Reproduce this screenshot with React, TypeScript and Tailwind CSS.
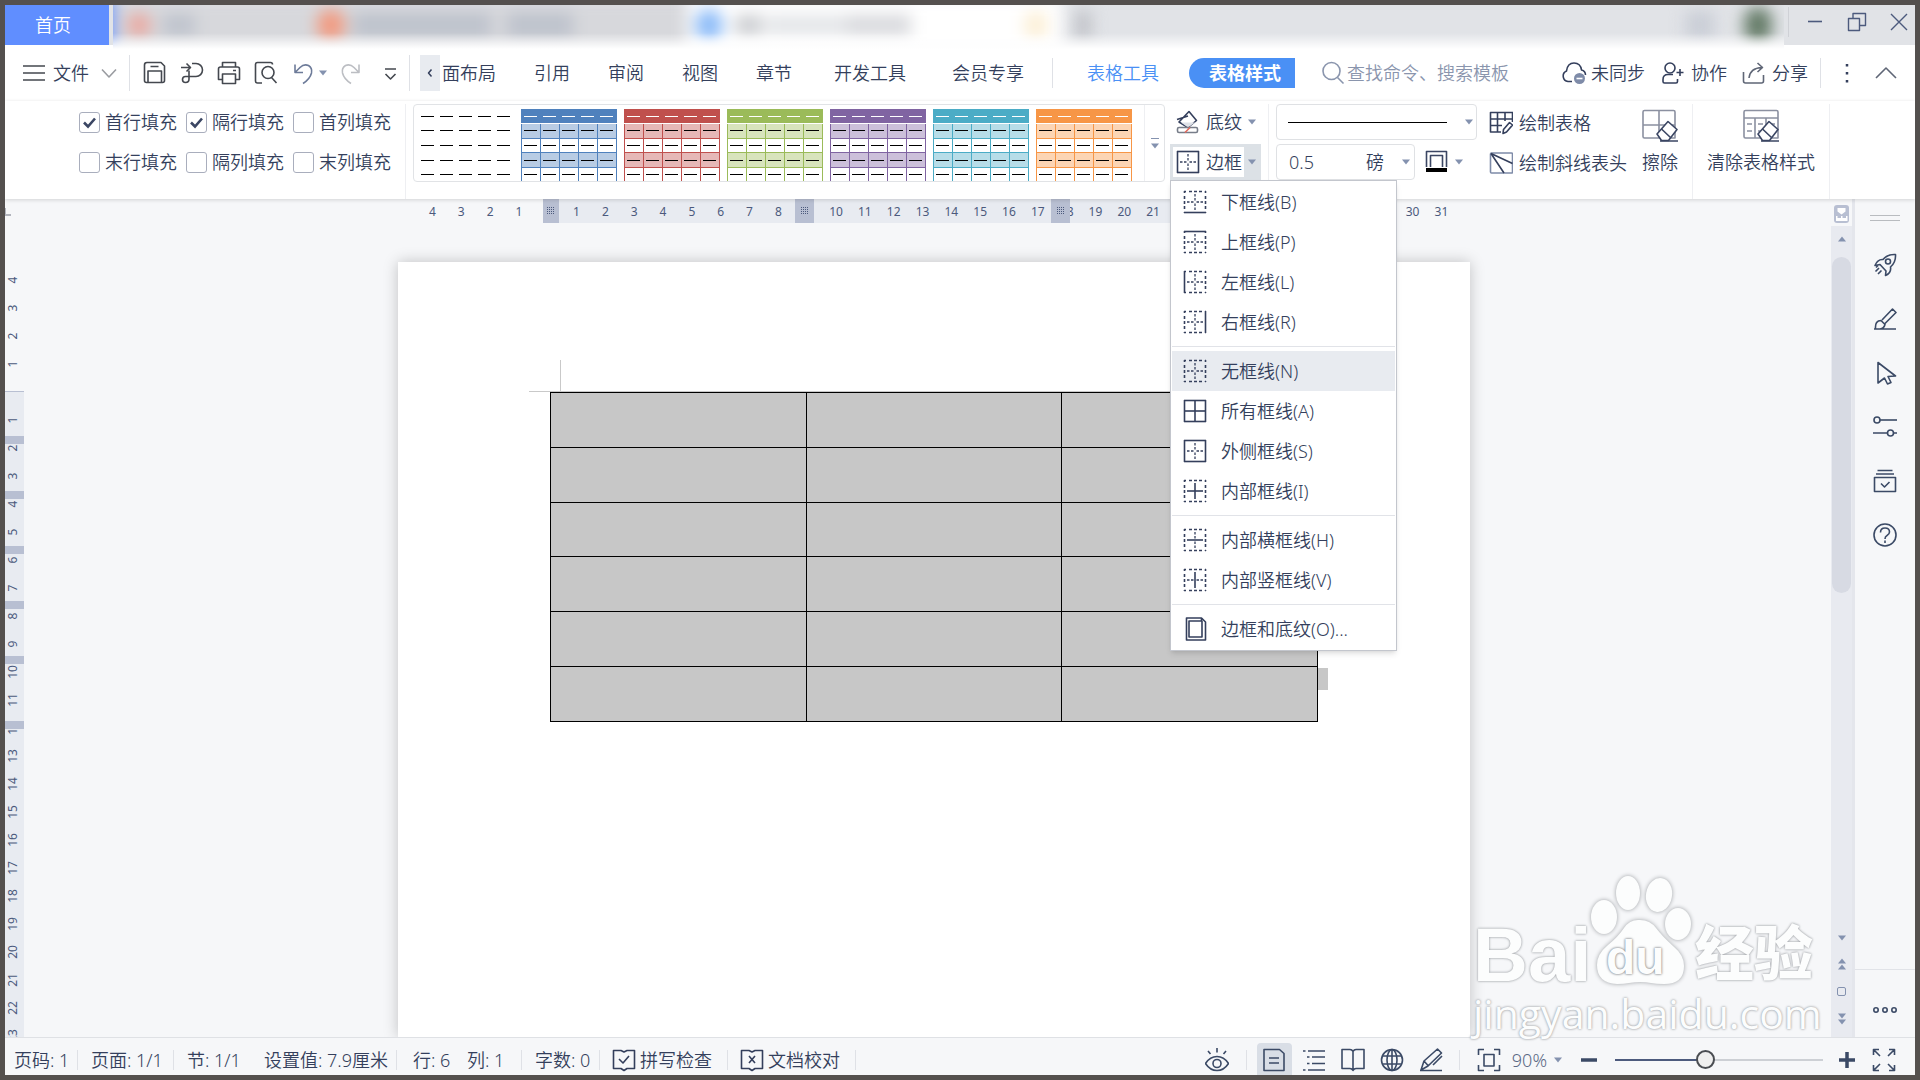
import type { ReactNode } from 'react';

interface IconProps {
  children: ReactNode;
  className?: string;
  box?: number;
}

interface BorderSides {
  top?: boolean;
  bottom?: boolean;
  left?: boolean;
  right?: boolean;
  h?: boolean;
  v?: boolean;
}

const Icon = ({ children, className = 'h-6 w-6', box = 24 }: IconProps) => (
  <svg
    viewBox={`0 0 ${box} ${box}`}
    className={`shrink-0 ${className}`}
    fill="none"
    stroke="currentColor"
    strokeWidth="1.6"
    strokeLinejoin="round"
    aria-hidden="true"
  >
    {children}
  </svg>
);

const Caret = ({ className = '' }: { className?: string }) => (
  <svg viewBox="0 0 8 6" className={`h-[6px] w-2 shrink-0 fill-[#8492af] ${className}`} aria-hidden="true">
    <path d="M0 0.5h8L4 5.5z" />
  </svg>
);

const Divider = ({ className = '' }: { className?: string }) => (
  <div className={`w-px shrink-0 bg-[#dfe1e6] ${className}`} />
);

const BorderIcon = ({ top, bottom, left, right, h, v }: BorderSides) => {
  const dash = (solid?: boolean) => (solid ? undefined : '2 3 3 2 3 2 3 3 2');
  const full = top && bottom;
  return (
    <Icon>
      <path d="M1 1.500h22" strokeDasharray={dash(top)} />
      <path d="M1 22.500h22" strokeDasharray={dash(bottom)} />
      <path d="M1.500 1v22" strokeDasharray={dash(left)} />
      <path d="M22.500 1v22" strokeDasharray={dash(right)} />
      {h ? <path d={full ? 'M1.500 12h21' : 'M4 12h16'} /> : <path d="M4 12h2.500M8 12h2.500M13.500 12h2.500M17.500 12h2.500" strokeWidth="1.300" />}
      {v ? <path d={full ? 'M12 1.500v21' : 'M12 4v16'} /> : <path d="M12 4v2.500M12 8v2.500M12 13.500v2.500M12 17.500v2.500" strokeWidth="1.300" />}
    </Icon>
  );
};

const menuGroups: { label: string; sides?: BorderSides; active?: boolean }[][] = [
  [
    { label: '下框线(B)', sides: { bottom: true } },
    { label: '上框线(P)', sides: { top: true } },
    { label: '左框线(L)', sides: { left: true } },
    { label: '右框线(R)', sides: { right: true } },
  ],
  [
    { label: '无框线(N)', sides: {}, active: true },
    { label: '所有框线(A)', sides: { top: true, bottom: true, left: true, right: true, h: true, v: true } },
    { label: '外侧框线(S)', sides: { top: true, bottom: true, left: true, right: true } },
    { label: '内部框线(I)', sides: { h: true, v: true } },
  ],
  [
    { label: '内部横框线(H)', sides: { h: true } },
    { label: '内部竖框线(V)', sides: { v: true } },
  ],
  [{ label: '边框和底纹(O)...' }],
];

const tableStyles = [
  { name: '无样式', main: '', light: '' },
  { name: '蓝色', main: '#4f81bd', light: '#b8cce4' },
  { name: '红色', main: '#c0504d', light: '#e6b8b7' },
  { name: '绿色', main: '#9bbb59', light: '#d8e4bc' },
  { name: '紫色', main: '#8064a2', light: '#ccc0da' },
  { name: '青色', main: '#4bacc6', light: '#b7dde8' },
  { name: '橙色', main: '#f79646', light: '#fcd5b4' },
];

const tabs = [
  { label: '引用', wide: false },
  { label: '审阅', wide: false },
  { label: '视图', wide: false },
  { label: '章节', wide: false },
  { label: '开发工具', wide: true },
  { label: '会员专享', wide: true },
];

const fills = [
  { label: '首行填充', on: true },
  { label: '隔行填充', on: true },
  { label: '首列填充', on: false },
  { label: '末行填充', on: false },
  { label: '隔列填充', on: false },
  { label: '末列填充', on: false },
];

const horizontalMarks = Array.from({ length: 36 }, (_, i) => i - 4);
const verticalMarks = Array.from({ length: 28 }, (_, i) => i - 4);

function StyleThumb({ main, light }: { main: string; light: string }) {
  const cols = [0, 1, 2, 3, 4];
  return (
    <svg viewBox="0 0 96 72" className="h-[72px] w-24" shapeRendering="crispEdges" aria-hidden="true">
      {main && (
        <>
          <rect width="96" height="14" fill={main} />
          <rect y="15" width="96" height="14" fill={light} />
          <rect y="44" width="96" height="14" fill={light} />
          <path d="M0 29.500h96M0 43.500h96M0 58.500h96M.5 15v57M19.500 15v57M38.500 15v57M57.500 15v57M76.500 15v57M95.500 15v57" stroke={main} />
        </>
      )}
      {[7, 21, 36, 51, 65].map((y) =>
        cols.map((c) => (
          <rect key={`${y}-${c}`} x={3 + c * 19} y={y} width="13" height="1" fill={main && y === 7 ? '#fff' : '#000'} />
        ))
      )}
    </svg>
  );
}

function TitleBar() {
  return (
    <div className="flex h-10 items-start bg-[#e1e3e7]">
      <button className="h-10 w-[104px] shrink-0 bg-[#608eff] pr-2 pb-px text-white">首页</button>
      <div className="relative z-10 ml-1 flex h-11 flex-1 overflow-hidden bg-[#e1e3e7]">
        <div className="flex flex-1 items-center pb-1 blur-[8px]">
          <div className="-ml-4 h-14 w-4 bg-[#608eff]" />
          <div className="flex h-14 w-[574px] items-center bg-[#d7d8dc]">
            <div className="ml-[14px] h-6 w-6 rounded-full bg-[#eba79f]" />
            <div className="ml-3 h-5 w-8 bg-[#bdc2cc]" />
            <div className="ml-[122px] h-8 w-7 rounded-full bg-[#f29a80]" />
            <div className="ml-2 h-6 w-[138px] bg-[#bdc2cc]" />
            <div className="ml-4 h-6 w-[66px] bg-[#bdc2cc]" />
          </div>
          <div className="flex h-14 w-[376px] items-center bg-white">
            <div className="ml-2 h-8 w-7 rounded-full bg-[#8dbcf8]" />
            <div className="ml-3 h-5 w-7 bg-[#cbcdd1]" />
            <div className="ml-1 h-5 w-20 bg-[#e3e5e8]" />
            <div className="h-5 w-16 bg-[#d7d8dc]" />
            <div className="ml-[113px] h-7 w-6 rounded-full bg-[#fcefd6]" />
          </div>
          <div className="ml-3 h-7 w-4 bg-[#bfc1c7]" />
          <div className="ml-auto h-7 w-7 bg-[#c9cdd6]" />
          <div className="mr-[12px] ml-[30px] h-9 w-7 rounded-full bg-[#637a66]" />
        </div>
        <div className="absolute inset-x-0 bottom-0 h-4 bg-linear-to-b from-white/0 to-white" />
      </div>
      <Divider className="mt-[2px] ml-[4px] h-[30px] !bg-[#cfd1d6]" />
      <div className="flex h-[34px] items-center gap-[22px] pr-[6px] pl-[16px] text-[#4c5a7d]">
        <button aria-label="最小化">
          <Icon className="h-5 w-5" box={20}><path d="M3 9.500h14" /></Icon>
        </button>
        <button aria-label="还原">
          <Icon className="h-5 w-5" box={20}>
            <path d="M1.500 6.500h11v12h-11zM6 6V1.500h12.500v12H13" strokeWidth="1.400" />
          </Icon>
        </button>
        <button aria-label="关闭">
          <Icon className="h-5 w-5" box={20}><path d="M2 2l16 16M18 2L2 18" strokeWidth="1.400" /></Icon>
        </button>
      </div>
    </div>
  );
}

function MenuRow() {
  return (
    <div className="flex h-14 items-center whitespace-nowrap bg-white">
      <button className="flex items-center pl-[17px]">
        <Icon className="h-6 w-6 text-[#44484f]"><path d="M1 5h22M1 12h22M1 19h22" /></Icon>
        <span className="ml-[7px]">文件</span>
        <Icon className="ml-3 h-4 w-4 text-[#9a9ca1]" box={16}><path d="M1 4.500l7 7.500 7-7.500" /></Icon>
      </button>
      <Divider className="ml-3 h-9" />
      <div className="ml-[13px] flex items-center gap-[13px] text-[#44484f]">
        <button aria-label="保存">
          <Icon>
            <path d="M1.500 4q0-2.500 2.500-2.500h14l3.500 3.500v14.500q0 2-2 2h-16q-2 0-2-2z" />
            <path d="M5 21V10h13.500v11M7.500 5.500h8" />
          </Icon>
        </button>
        <button aria-label="输出为PDF">
          <Icon>
            <path d="M1 6.500h9M6.500 2.500l4 4-4 4" />
            <path d="M12 2.500h4a6 6 0 010 13H5.500a3 3 0 000 6q3.500 0 3.500-3.500V9.500" />
          </Icon>
        </button>
        <button aria-label="打印">
          <Icon>
            <path d="M5.500 6V1.500h13V6M5 18.500H1.500V8q0-2 2-2h17q2 0 2 2v10.500H19M16 9.500h3" />
            <path d="M5.500 13h13v9.500h-13z" />
          </Icon>
        </button>
        <button aria-label="打印预览">
          <Icon>
            <path d="M8 22H3.500q-2 0-2-2V3.500q0-2 2-2h13q2 0 2 2" />
            <circle cx="14" cy="11.500" r="6" />
            <path d="M17.500 16.500l5 5.500" />
          </Icon>
        </button>
        <button aria-label="撤销" className="text-[#6d7b99]">
          <Icon><path d="M4 3.500v8h8M4.500 11L9 6.500q4-4 8.500-2 4 2.500 3 7.500-1.500 6-8.500 10.500" /></Icon>
        </button>
      </div>
      <Caret className="ml-1" />
      <button aria-label="恢复" className="ml-3 text-[#bcbec3]">
        <Icon><path d="M20 3.500v8h-8M19.500 11L15 6.500q-4-4-8.500-2-4 2.500-3 7.500 1.500 6 8.500 10.500" /></Icon>
      </button>
      <button aria-label="更多" className="ml-[15px] text-[#44484f]">
        <Icon><path d="M7 8h11M7.500 13l5 5 5-5" /></Icon>
      </button>
      <Divider className="ml-[7px] h-9" />
      <button aria-label="向左滚动" className="ml-[10px] flex h-9 w-5 items-center justify-center bg-[#e8ebf0]">
        <Icon className="h-3 w-3" box={12}><path d="M7.500 2.500L4.500 6l3 3.500" strokeWidth="1.500" /></Icon>
      </button>
      <nav className="flex items-center">
        <a href="#layout" className="pr-[19px] pl-0.5">面布局</a>
        {tabs.map((tab) => (
          <a key={tab.label} href="#tab" className={tab.wide ? 'px-[23px]' : 'px-[19px]'}>{tab.label}</a>
        ))}
        <Divider className="ml-[5px] h-[30px]" />
        <a href="#tools" className="ml-[34px] text-[#4a90f5]">表格工具</a>
        <a href="#style" className="ml-[30px] flex h-[30px] items-center rounded-l-full rounded-r-sm bg-[#4a90f5] pr-[14px] pl-5 font-bold text-white">
          表格样式
        </a>
      </nav>
      <label className="ml-[26px] flex items-center gap-[2px] text-[#8a95ad]">
        <Icon><circle cx="10.500" cy="10" r="8.500" /><path d="M16.500 16.500l6 6" /></Icon>
        <input type="text" aria-label="搜索" placeholder="查找命令、搜索模板" className="w-[180px] bg-transparent outline-none placeholder:text-[#8a95ad]" />
      </label>
      <div className="ml-auto flex items-center">
        <button className="flex items-center gap-1">
          <Icon className="h-[26px] w-[26px]" box={26}>
            <path d="M11 21.500H7a5.500 5.500 0 01-1.500-10.500q1-8 7.500-8t7.500 7q4 1 4 5" />
            <circle cx="18.500" cy="18.500" r="5.500" fill="#7e8ba8" stroke="none" />
            <path d="M15.500 18.500h6" stroke="#fff" />
          </Icon>
          未同步
        </button>
        <button className="ml-4 flex items-center gap-[6px]">
          <Icon>
            <circle cx="9" cy="7" r="5" />
            <path d="M12 13.500H7q-5 0-5 5v2q0 1.500 1.500 1.500H15q1.500 0 1.500-1.500V18M15.500 11.500h7M19 8v7" />
          </Icon>
          协作
        </button>
        <button className="ml-[15px] flex items-center gap-[6px]">
          <Icon className="h-6 w-6 text-[#5f6676]">
            <path d="M1.500 11v9q0 2 2 2h16q2 0 2-2v-6" />
            <path d="M7 17q1-10 13-10.500M15.500 2l5 4.500-5 4.500" />
          </Icon>
          分享
        </button>
        <Divider className="ml-3 h-[30px]" />
        <button aria-label="更多选项" className="ml-[14px]">
          <Icon><path d="M12 3v2.500M12 11v2.500M12 19v2.500" strokeWidth="2.500" /></Icon>
        </button>
        <button aria-label="折叠功能区" className="mr-[17px] ml-[15px]">
          <Icon className="h-6 w-6 text-[#5f6676]"><path d="M2 17l10-10 10 10" /></Icon>
        </button>
      </div>
    </div>
  );
}

function BorderMenu() {
  return (
    <div role="menu" className="absolute top-[76px] left-0 z-30 w-[227px] border border-[#c3c6cd] bg-white px-px py-px shadow-md">
      {menuGroups.map((group, i) => (
        <div key={group[0].label}>
          {i > 0 && <div className="my-1 h-px bg-[#e1e3e8]" />}
          {group.map((item) => (
            <button
              key={item.label}
              role="menuitem"
              className={`flex h-10 w-full items-center gap-[14px] pl-[11px] ${item.active ? 'bg-[#e8ebf0]' : ''}`}
            >
              {item.sides ? (
                <BorderIcon {...item.sides} />
              ) : (
                <Icon>
                  <path d="M3.500 1h15l4 4v18h-19z" />
                  <path d="M6 4h13v16H6zM18.500 1v3" />
                </Icon>
              )}
              {item.label}
            </button>
          ))}
        </div>
      ))}
    </div>
  );
}

const Eraser = () => (
  <>
    <path d="M15 26l11-12.500 9 8-8.500 11h-7z" fill="#fff" stroke="#3b4663" />
    <path d="M18 33h18M19.500 21l9 8.500" stroke="#3b4663" />
  </>
);

function Ribbon() {
  return (
    <div className="relative z-20 flex h-[98px] items-start whitespace-nowrap bg-white pt-[3px] shadow-[0_1px_4px_rgba(0,0,0,0.15)]">
      <div className="ml-[74px] grid grid-cols-3 gap-x-[9px] gap-y-1">
        {fills.map((fill) => (
          <label key={fill.label} className="relative flex h-9 items-center">
            <input
              type="checkbox"
              defaultChecked={fill.on}
              className="peer mr-[5px] h-[21px] w-[21px] appearance-none rounded-[3px] border border-[#a9aebd] bg-white"
            />
            <svg viewBox="0 0 21 21" className="pointer-events-none absolute left-0 hidden h-[21px] w-[21px] peer-checked:block" aria-hidden="true">
              <path d="M5 10.500l4 4 7-8" fill="none" stroke="#3b4663" strokeWidth="2.600" />
            </svg>
            {fill.label}
          </label>
        ))}
      </div>
      <Divider className="ml-[14px] h-[95px] !bg-[#eeeff2]" />

      <div className="ml-[7px] flex h-[78px] w-[752px] shrink-0 rounded-sm border border-[#e1e3e6] pt-1 pl-1">
        <div className="flex flex-1 gap-[7px]">
          {tableStyles.map((s) => (
            <button key={s.name} aria-label={s.name}>
              <StyleThumb main={s.main} light={s.light} />
            </button>
          ))}
        </div>
        <button aria-label="更多样式" className="-mt-1 flex w-5 flex-col items-center justify-center gap-1 border-l border-[#eeeff2]">
          <span className="h-px w-2 bg-[#8492af]" />
          <Caret />
        </button>
      </div>

      <div className="relative ml-[5px] flex w-[91px] flex-col gap-1">
        <button className="flex h-9 items-center pl-[6px]">
          <Icon>
            <path d="M3 12L13 1.500l7.500 9L12 17.500zM1 9.500l11-3.500" />
            <path d="M5 12.500h14l-7 5z" fill="#dfe2e8" stroke="none" />
            <rect x="1.500" y="17.500" width="20" height="5" rx="1.500" stroke="#777d89" />
            <path d="M9 22.500l5-5" stroke="#e36a5c" />
          </Icon>
          <span className="ml-[6px]">底纹</span>
          <Caret className="ml-[6px]" />
        </button>
        <div className="flex h-9 items-center bg-[#dce1e6] p-[3px]">
          <button className="flex h-[30px] w-[71px] items-center gap-[6px] bg-white pl-[3px]">
            <BorderIcon top bottom left right />
            边框
          </button>
          <button aria-label="边框选项" className="flex h-full flex-1 items-center pl-1"><Caret /></button>
        </div>
        <BorderMenu />
      </div>
      <Divider className="ml-[7px] h-[95px] !bg-[#eeeff2]" />

      <div className="ml-[7px] flex w-[201px] flex-col gap-1">
        <div className="relative flex h-9 items-center">
          <select aria-label="线型" className="h-9 w-full appearance-none rounded-sm border border-[#dfe1e4] bg-white text-transparent">
            <option>实线</option>
          </select>
          <div className="pointer-events-none absolute inset-x-3 flex items-center justify-between">
            <span className="h-px w-[159px] bg-black" />
            <Caret className="-mr-2" />
          </div>
        </div>
        <div className="flex h-9 items-center">
          <label className="flex h-9 w-[139px] items-center rounded-sm border border-[#dfe1e4] pr-1 pl-3">
            <input type="text" aria-label="线宽" defaultValue="0.5" className="w-[77px] outline-none" />
            磅
            <Caret className="ml-auto" />
          </label>
          <button aria-label="边框颜色" className="ml-[10px] flex items-center gap-[6px]">
            <Icon>
              <path d="M1.500 17V1.500h20V17M5.500 17V5.500h12V17" stroke="#3b4663" />
              <path d="M1 20h21" stroke="#000" strokeWidth="4" />
            </Icon>
            <Caret />
          </button>
        </div>
      </div>

      <div className="ml-3 flex flex-col gap-1">
        <button className="flex h-9 items-center gap-[6px] pt-px">
          <Icon>
            <path d="M12 21H1.500V1.500h22V11M1.500 8h22M1.500 14.500H13M8.500 1.500V21M16 1.500V10" />
            <path d="M14 22.500l.5-4 6-7 3 2.500-6 7z" />
          </Icon>
          绘制表格
        </button>
        <button className="flex h-9 items-center gap-[6px] pt-px">
          <Icon>
            <rect x="1.500" y="2" width="22" height="20" rx="1" stroke="#7e8ba8" />
            <path d="M2 2.500l21.500 10M2 2.500L15 22" />
          </Icon>
          绘制斜线表头
        </button>
      </div>

      <button className="mt-1 ml-[15px] flex flex-col items-center">
        <Icon className="h-9 w-9 text-[#8b90a0]" box={36}>
          <path d="M1 4q0-1.500 1.500-1.500h29q1.500 0 1.500 1.500v26H2.500q-1.500 0-1.500-1.500zM1 17h32M17 2.500V30" />
          <Eraser />
        </Icon>
        <span className="flex h-9 items-center">擦除</span>
      </button>
      <Divider className="ml-[14px] h-[95px] !bg-[#eeeff2]" />
      <button className="mt-1 ml-[14px] flex flex-col items-center">
        <Icon className="h-9 w-9 text-[#8b90a0]" box={36}>
          <path d="M1 4q0-1.500 1.500-1.500h31q1.500 0 1.500 1.500v26H2.500q-1.500 0-1.500-1.500zM1 10h34M12 10v20M23 10v20" />
          <path d="M4 16h5M4 23h5M15 16h5M15 23h5M26 16h6" />
          <Eraser />
        </Icon>
        <span className="flex h-9 items-center">清除表格样式</span>
      </button>
      <Divider className="ml-[14px] h-[95px] !bg-[#eeeff2]" />
    </div>
  );
}

const Grip = ({ className }: { className: string }) => (
  <div className={`absolute top-0 flex h-6 items-center justify-center bg-[#b8bfd2] ${className}`}>
    <svg viewBox="0 0 8 8" className="h-2 w-2" stroke="#4c5a7d" strokeDasharray="1 1" shapeRendering="crispEdges" aria-hidden="true">
      <path d="M0 .5h8M0 2.500h8M0 4.500h8M0 6.500h8" />
    </svg>
  </div>
);

function VerticalRuler() {
  return (
    <div className="relative w-[19px] shrink-0 overflow-hidden text-[12px] leading-4 font-normal text-[#4c5a7d]">
      <div className="absolute top-[192px] bottom-0 w-full border-t border-[#b8bfd2] bg-[#e8ebf1]" />
      <div className="absolute top-[9px] left-0 h-2 w-[6px] border-b-2 border-l border-[#b1b4bd]" />
      <div className="relative pt-[67px]">
        {verticalMarks.map((n) => (
          <div key={n} className="flex h-7 w-4 items-center justify-center">
            <span className="-rotate-90">{n === 0 ? '' : Math.abs(n)}</span>
          </div>
        ))}
      </div>
      <div className="absolute top-[237px] h-2 w-full bg-[#b8bfd2]" />
      <div className="absolute top-[292px] h-2 w-full bg-[#b8bfd2]" />
      <div className="absolute top-[347px] h-2 w-full bg-[#b8bfd2]" />
      <div className="absolute top-[402px] h-2 w-full bg-[#b8bfd2]" />
      <div className="absolute top-[457px] h-2 w-full bg-[#b8bfd2]" />
      <div className="absolute top-[522px] h-2 w-full bg-[#b8bfd2]" />
    </div>
  );
}

function Page() {
  return (
    <div className="flex flex-1 justify-center overflow-hidden pl-[13px]">
      <div className="flex w-[1072px] flex-col">
        <div className="relative h-6 text-[12px] leading-[26px] font-normal text-[#4c5a7d]">
          <div className="absolute left-[145px] h-6 w-[775px] bg-[#e8ebf1]" />
          <div className="relative ml-5 flex w-[1038px]">
            {horizontalMarks.map((n) => (
              <span key={n} className="flex-1 text-center">{n === 0 ? '' : Math.abs(n)}</span>
            ))}
          </div>
          <Grip className="left-[145px] w-4" />
          <Grip className="left-[397px] w-[19px]" />
          <Grip className="left-[653px] w-[19px]" />
        </div>
        <div className="mt-[39px] flex-1 bg-white pt-[98px] shadow-[0_0_14px_rgba(0,0,0,0.22)]">
          <div className="ml-[162px] h-[31px] w-px bg-[#c9c9c9]" />
          <div className="ml-[131px] h-px w-[789px] bg-[#c9c9c9]" />
          <div className="ml-[152px] flex items-end">
            <table className="h-[330px] w-[768px] table-fixed border-collapse bg-[#c7c7c7]" aria-label="文档表格">
              <tbody>
                {[1, 2, 3, 4, 5, 6].map((row) => (
                  <tr key={row}>
                    <td className="border border-black" />
                    <td className="border border-black" />
                    <td className="border border-black" />
                  </tr>
                ))}
              </tbody>
            </table>
            <div className="mb-8 h-[22px] w-[10px] bg-[#c7c7c7]" />
          </div>
        </div>
      </div>
    </div>
  );
}

function ScrollBar() {
  return (
    <div className="flex w-[24px] shrink-0 flex-col border-r-[3px] border-[#e4e6ec]">
      <button aria-label="标尺" className="mx-[3px] mt-[6px] mb-[3px] h-[18px] w-[15px] rounded-[3px] bg-[#b8bfd2]">
        <svg viewBox="0 0 15 18" fill="#fff" aria-hidden="true">
          <path d="M3.500 3h8v3.500l-4 3-4-3zM2 11h1.500v2H7v-2h1.500v2H12v-2h1.500v5H2z" />
        </svg>
      </button>
      <div className="flex flex-1 flex-col items-center bg-[#e8eaf0]">
        <Caret className="mt-[10px] rotate-180" />
        <div className="mt-[15px] h-[336px] w-[19px] rounded-full bg-[#d7dae3]" />
        <div className="mt-auto mb-3 flex flex-col items-center gap-[17px]">
          <Caret />
          <div className="rotate-180"><Caret /><Caret /></div>
          <div className="h-[9px] w-[9px] rounded-xs border border-[#8492af]" />
          <div><Caret /><Caret /></div>
        </div>
      </div>
    </div>
  );
}

function SideBar() {
  return (
    <aside className="flex w-[60px] shrink-0 flex-col items-center text-[#3b4a66]">
      <div className="mt-4 h-[6px] w-[30px] border-y border-[#b9bcc0]" />
      <div className="mt-[32px] flex flex-col gap-[30px]">
        <button aria-label="推荐">
          <Icon>
            <path d="M22.500 1.500q-8-.5-12.500 5-5.500-.5-8 6l5-1 6 6.500-.5 4.500q6-2.500 5-8.500 5.500-4.500 5-12.500z" />
            <circle cx="15" cy="8.500" r="2.500" />
            <path d="M6 15l-3.500 3.500M8.500 17.500L5 21M5 12.500l-2 2" />
          </Icon>
        </button>
        <button aria-label="样式">
          <Icon><path d="M1 22h22M2.500 21.500q-.5-8 5.500-8l4 4q-1 4-5 4.500M9 13L19.500 2l3.500 3.500L12 16.500" /></Icon>
        </button>
        <button aria-label="选择">
          <Icon><path d="M5 1.500l17.500 13.500-7.500.5 3 6-3.500 1.500-3-6L5 22z" /></Icon>
        </button>
        <button aria-label="属性">
          <Icon>
            <circle cx="4" cy="5" r="3" /><path d="M7 5h17" />
            <circle cx="17.500" cy="18" r="3" /><path d="M0 18h14.500M20.500 18H24" />
          </Icon>
        </button>
        <button aria-label="备份">
          <Icon><path d="M4.500 1.500h15M3 5h18M1.500 8.500h21v14h-21zM8 14.500l3.500 3.500 5-5" /></Icon>
        </button>
        <button aria-label="帮助">
          <Icon>
            <circle cx="12" cy="12" r="11" />
            <path d="M7.500 9.500q0-4.500 4.500-4.500t4.500 4q0 2-2.500 3.500-2 1-2 3.500M12 17.500v2.500" />
          </Icon>
        </button>
      </div>
      <div className="mt-auto h-px w-full bg-[#e1e3e8]" />
      <button aria-label="更多" className="mt-7 mb-[15px]">
        <Icon>
          <circle cx="3" cy="12" r="2.200" /><circle cx="12" cy="12" r="2.200" /><circle cx="21" cy="12" r="2.200" />
        </Icon>
      </button>
    </aside>
  );
}

function Watermark() {
  return (
    <div
      className="pointer-events-none absolute right-[96px] bottom-[34px] z-30 h-[168px] w-[346px] font-normal text-[#fcfdfd] [text-shadow:0_0_2px_#a2a5a9,0_0_3px_#b4b7bb]"
      aria-hidden="true"
    >
      <svg viewBox="0 0 104 112" className="absolute top-[2px] left-[116px] h-[112px] w-[104px] drop-shadow-[0_0_2px_#9b9ea2]" fill="#fcfdfd">
        <ellipse cx="15" cy="42" rx="13" ry="17" />
        <ellipse cx="39" cy="18" rx="12" ry="17" />
        <ellipse cx="70" cy="20" rx="13" ry="17" transform="rotate(10 70 20)" />
        <ellipse cx="89" cy="49" rx="13" ry="16" />
        <path d="M51 45q10 0 16 8t17 18q11 9 11 20 0 18-20 18-8 0-13-1-10-2-22 0-5 1-12 1-20-1-20-19 0-11 11-20 10-8 16-17t16-8z" />
      </svg>
      <span className="absolute top-[38px] left-0 font-['Liberation_Sans'] text-[76px] leading-[88px] font-bold">Bai</span>
      <span className="absolute top-[59px] left-[133px] font-['Liberation_Sans'] text-[48px] leading-[52px] font-bold [text-shadow:0_0_2px_#85888c,0_0_3px_#94979b]">du</span>
      <span className="absolute top-[43px] left-[222px] text-[59px] leading-[72px] font-black">经验</span>
      <span className="absolute top-[116px] left-0 font-['Open_Sans'] text-[41px] leading-[48px]">jingyan.baidu.com</span>
    </div>
  );
}

function StatusBar() {
  return (
    <footer className="flex h-[38px] items-center whitespace-nowrap border-t border-[#dfe1e5] bg-[#f6f7f9] pt-[6px]">
      <span className="ml-[9px] w-[63px]">页码: 1</span>
      <Divider className="h-5" />
      <span className="ml-[13px] w-[82px]">页面: 1/1</span>
      <Divider className="h-5" />
      <span className="ml-[13px] w-[77px]">节: 1/1</span>
      <span className="w-[132px]">设置值: 7.9厘米</span>
      <Divider className="h-5" />
      <span className="ml-4 w-[54px]">行: 6</span>
      <span className="w-[54px]">列: 1</span>
      <Divider className="h-5" />
      <span className="ml-[13px] w-16">字数: 0</span>
      <Divider className="h-5" />
      <button className="mr-[15px] ml-3 flex items-center gap-1">
        <Icon>
          <path d="M9 2.500H1.500v18H9l3 2 3-2h7.500v-18H15l-3 1.500z" /><path d="M7 11l4 4 6-7" />
        </Icon>
        拼写检查
      </button>
      <Divider className="h-5" />
      <button className="mr-[15px] ml-3 flex items-center gap-1">
        <Icon>
          <path d="M9 2.500H1.500v18H9l3 2 3-2h7.500v-18H15l-3 1.500z" /><path d="M9 8l6 7M15 8l-6 7" />
        </Icon>
        文档校对
      </button>
      <Divider className="h-5" />

      <div className="ml-auto flex items-center text-[#3b4a66]">
        <button aria-label="护眼模式">
          <Icon>
            <path d="M.5 15.500Q5 8.500 12 8.500t11.500 7q-4.500 7-11.500 7t-11.500-7zM12 0v4.500M3 3l2.500 3M21 3l-2.500 3" />
            <circle cx="12" cy="15.500" r="4" />
          </Icon>
        </button>
        <Divider className="ml-[17px] h-5" />
        <button aria-label="页面视图" className="-my-2 ml-[10px] flex h-[34px] w-[35px] items-center justify-center rounded-t-sm bg-[#d9dee6]">
          <Icon><path d="M2 1.500h15.500l4.500 4v17H2zM7 10h10M7 15h10" /></Icon>
        </button>
        <div className="ml-[10px] flex items-center gap-[15px]">
          <button aria-label="大纲">
            <Icon><path d="M1 3h2.500M6 3h17M5 9h2.500M10 9h13M5 15.500h2.500M10 15.500h13M1 22h2.500M6 22h17" /></Icon>
          </button>
          <button aria-label="阅读版式">
            <Icon><path d="M12 3.500q-1-2-3-2H1v19h8q2 0 3 2 1-2 3-2h8v-19h-8q-2 0-3 2zM12 3.500v19" /></Icon>
          </button>
          <button aria-label="Web版式">
            <Icon>
              <circle cx="12" cy="12" r="10.500" /><ellipse cx="12" cy="12" rx="5" ry="10.500" />
              <path d="M2.500 8h19M2.500 16h19M12 1.500v21" />
            </Icon>
          </button>
          <button aria-label="写作模式">
            <Icon><path d="M1 22.500h22M2 22l3-9L18.500 1l4 4L9 18l-7 4zM5 13l4.500 5M14 17l9-9" /></Icon>
          </button>
        </div>
        <Divider className="ml-4 h-5" />
        <button aria-label="适合页宽" className="ml-[17px]">
          <Icon><path d="M1.500 7V1.500H7M17 1.500h5.500V7M22.500 17v5.500H17M7 22.500H1.500V17M7 6.500h10v11.500H7z" /></Icon>
        </button>
        <button className="ml-[11px] flex items-center gap-[7px] text-[#5b6985]">90%<Caret /></button>
        <button aria-label="缩小" className="ml-[15px]">
          <Icon><path d="M4 12h16" strokeWidth="3.500" /></Icon>
        </button>
        <input
          type="range"
          aria-label="显示比例"
          defaultValue={43}
          className="ml-[14px] h-5 w-[208px] appearance-none bg-[linear-gradient(to_right,#4c5a7d_43%,#cdd0d5_43%)] bg-[length:100%_2px] bg-center bg-no-repeat [&::-webkit-slider-thumb]:h-[19px] [&::-webkit-slider-thumb]:w-[19px] [&::-webkit-slider-thumb]:appearance-none [&::-webkit-slider-thumb]:rounded-full [&::-webkit-slider-thumb]:border-2 [&::-webkit-slider-thumb]:border-[#4a4d52] [&::-webkit-slider-thumb]:bg-[#efefef]"
        />
        <button aria-label="放大" className="ml-3">
          <Icon><path d="M4 12h16M12 4v16" strokeWidth="3.500" /></Icon>
        </button>
        <button aria-label="全屏" className="mr-[19px] ml-[13px]">
          <Icon>
            <path d="M1.500 7V1.500H7M2 2l6 6M17 1.500h5.500V7M22 2l-6 6M22.500 17v5.500H17M22 22l-6-6M7 22.500H1.500V17M2 22l6-6" />
          </Icon>
        </button>
      </div>
    </footer>
  );
}

export default function App() {
  return (
    <div className="relative flex h-screen flex-col overflow-hidden border-[5px] border-[#54504e] bg-[#f6f7f9] font-['Noto_Sans','Noto_Sans_CJK_SC',sans-serif] text-[18px] leading-6 font-[350] text-[#343f5c]">
      <TitleBar />
      <MenuRow />
      <Ribbon />
      <main className="flex min-h-0 flex-1">
        <VerticalRuler />
        <Page />
        <ScrollBar />
        <SideBar />
      </main>
      <StatusBar />
      <Watermark />
    </div>
  );
}
